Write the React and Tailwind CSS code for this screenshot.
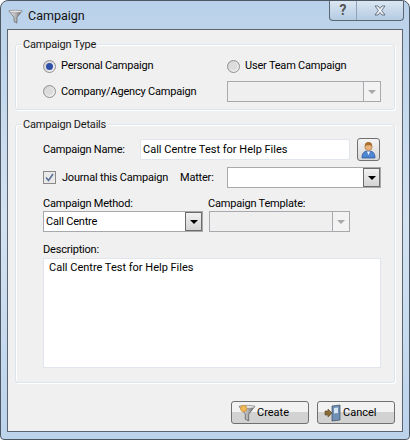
const FONT = "font-['Roboto','Liberation_Sans',sans-serif]";

function Funnel({ size = 16, dot = false }) {
  return (
    <svg width={size} height={size} viewBox="0 0 16 16" className="shrink-0">
      <defs>
        <linearGradient id={dot ? "fa" : "fb"} x1="0" x2="1" y1="0" y2="0">
          <stop offset="0" stopColor="#f8f8f8" />
          <stop offset="0.55" stopColor="#b0b0b0" />
          <stop offset="1" stopColor="#5f5f5f" />
        </linearGradient>
      </defs>
      <path
        d="M1 2 L15 2 L9.5 9 L9.5 15 L6.5 13.5 L6.5 9 Z"
        fill={`url(#${dot ? "fa" : "fb"})`}
        stroke="#6a6a6a"
        strokeWidth="0.8"
      />
      <ellipse cx="8" cy="2.6" rx="7" ry="1.4" fill="#e4e4e4" stroke="#808080" strokeWidth="0.5" />
      {dot && <circle cx="5" cy="4" r="2.8" fill="#f0b85a" stroke="#c98a2a" strokeWidth="0.6" />}
    </svg>
  );
}

function Radio({ checked }) {
  return (
    <span className="w-[13px] h-[13px] rounded-full border border-[#8f8f8f] bg-gradient-to-br from-[#cfcfcf] to-[#f5f5f5] flex items-center justify-center shrink-0">
      <span
        className={`w-[7px] h-[7px] rounded-full ${
          checked ? "bg-[#2f50a8]" : "bg-[#dcdcdc]"
        }`}
      />
    </span>
  );
}

function Combo({ width, text, disabled, arrowBox }) {
  return (
    <div
      className={`h-[21px] border border-[#a9a9ad] flex shrink-0 ${
        disabled ? "bg-[#efefef]" : "bg-white"
      } ${width}`}
    >
      <div className="flex-1 pl-[2px] leading-[19px] text-black">{text}</div>
      <div
        className={`w-[17px] flex items-center justify-center ${
          arrowBox
            ? "border border-[#6c6c6c] bg-gradient-to-b from-[#f2f2f2] to-[#d4d4d4]"
            : "border-l border-[#a9a9ad] bg-[#f3f3f3]"
        }`}
      >
        <span
          className={`w-0 h-0 border-x-[4px] border-x-transparent border-t-[4px] ${
            disabled ? "border-t-[#a8a8a8]" : "border-t-black"
          }`}
        />
      </div>
    </div>
  );
}

function Group({ title, className, children }) {
  return (
    <div className={`relative border border-[#dce4ec] rounded-[3px] shadow-[inset_1px_1px_0_#fff,1px_1px_0_#fff] ${className}`}>
      <span className="absolute left-[6px] -top-[8px] bg-[#f0f0f0] px-[1px] leading-[15px] text-[#1a1a1a] whitespace-nowrap">
        {title}
      </span>
      {children}
    </div>
  );
}

function Button({ icon, label }) {
  return (
    <div className="w-[78px] h-[23px] rounded-[3px] border border-[#707070] bg-gradient-to-b from-[#f2f2f2] from-50% to-[#d2d2d2] to-50% flex items-center pl-[6px] gap-[1px] text-black tracking-normal">
      {icon}
      <span className="pt-[2px]">{label}</span>
    </div>
  );
}

export default function App() {
  return (
    <div className={`${FONT} text-[11px] tracking-[-0.2px] whitespace-nowrap w-[410px] h-[440px] bg-white`}>
      <div className="w-full h-full rounded-t-[8px] rounded-b-[4px] border border-[#4d5863] bg-gradient-to-b from-[#b9d1ea] via-[#d3e2f1] to-[#bcd3ec] flex flex-col px-[6px] pb-[7px]">
        {/* title bar */}
        <div className="h-[28px] flex items-start shrink-0">
          <div className="flex items-center gap-[5px] pt-[6px] pl-[1px]">
            <Funnel size={15} />
            <span className="text-[12.5px] tracking-normal text-[#111]">Campaign</span>
          </div>
          <div className="ml-auto -mr-[1px] h-[20px] flex rounded-b-[4px] border border-t-0 border-[#5c6773] bg-gradient-to-b from-[#dbe6f2] to-[#b5cbe3] text-[#555] font-bold">
            <div className="w-[27px] flex items-center justify-center border-r border-[#8fa3b8] text-[14px]">?</div>
            <div className="w-[46px] flex items-center justify-center">
              <svg width="12" height="11" viewBox="0 0 12 11">
                <path
                  d="M1 1 H4 L6 3.5 L8 1 H11 L7.6 5.5 L11 10 H8 L6 7.5 L4 10 H1 L4.4 5.5 Z"
                  fill="#f4f7fb"
                  stroke="#5a6572"
                  strokeWidth="0.9"
                />
              </svg>
            </div>
          </div>
        </div>

        {/* dialog body */}
        <div className="flex-1 border border-[#5b6571] bg-[#f0f0f0] px-[7px] pt-[14px] flex flex-col">
          <Group title="Campaign Type" className="h-[66px] shrink-0 pl-[27px] pt-[13px]">
            <div className="flex items-center h-[16px]">
              <Radio checked />
              <span className="ml-[5px] w-[166px] pt-[1px]">Personal Campaign</span>
              <Radio />
              <span className="ml-[5px] pt-[1px]">User Team Campaign</span>
            </div>
            <div className="flex items-center mt-[7px]">
              <Radio />
              <span className="ml-[5px] w-[166px] pt-[2px]">Company/Agency Campaign</span>
              <Combo width="w-[154px]" disabled />
            </div>
          </Group>

          <Group title="Campaign Details" className="mt-[14px] h-[259px] shrink-0 pl-[27px] pt-[13px]">
            <div className="flex items-center h-[23px]">
              <span className="w-[97px] pt-[2px]">Campaign Name:</span>
              <div className="w-[210px] h-[21px] bg-white border border-[#e1e6ec] rounded-[2px] pl-[2px] leading-[20px] tracking-normal">
                Call Centre Test for Help Files
              </div>
              <div className="ml-[7px] w-[23px] h-[23px] rounded-[3px] border border-[#707070] bg-gradient-to-b from-[#f4f4f4] to-[#d8d8d8] flex items-center justify-center">
                <svg width="15" height="18" viewBox="0 0 15 18">
                  <path d="M1 17 C1 11 4 10 7.5 10 C11 10 14 11 14 17 Z" fill="#4f86d0" stroke="#1f4f99" strokeWidth="0.7" />
                  <path d="M6 10.5 L7.5 14 L9 10.5 Z" fill="#fff" />
                  <circle cx="7.5" cy="6" r="3.6" fill="#eab27c" stroke="#9a6a3a" strokeWidth="0.6" />
                  <path d="M3.8 5.6 C3.6 2 5.5 1 7.5 1 C9.5 1 11.4 2 11.2 5.6 C10 3.8 5 3.8 3.8 5.6 Z" fill="#a8702f" />
                </svg>
              </div>
            </div>

            <div className="flex items-center mt-[6px]">
              <span className="w-[13px] h-[13px] border border-[#8a8a8a] bg-[#e9e9e9] flex items-center justify-center shrink-0">
                <svg width="9" height="9" viewBox="0 0 9 9">
                  <path d="M1 4.5 L3.5 7.5 L8 1" fill="none" stroke="#5a6f96" strokeWidth="1.6" />
                </svg>
              </span>
              <span className="ml-[6px] w-[118px] pt-[2px]">Journal this Campaign</span>
              <span className="w-[47px] pt-[2px]">Matter:</span>
              <Combo width="w-[154px]" arrowBox />
            </div>

            <div className="flex mt-[8px] leading-[15px]">
              <span className="w-[165px]">Campaign Method:</span>
              <span>Campaign Template:</span>
            </div>
            <div className="flex">
              <Combo width="w-[160px]" text="Call Centre" arrowBox />
              <div className="w-[6px]" />
              <Combo width="w-[141px]" disabled />
            </div>

            <div className="mt-[10px] leading-[16px]">Description:</div>
            <div className="w-[338px] h-[110px] bg-white border border-[#e1e6ec] px-[5px] pt-[1px] tracking-normal">
              Call Centre Test for Help Files
            </div>
          </Group>

          <div className="mt-auto mb-[7px] flex justify-end gap-[8px]">
            <Button icon={<Funnel size={18} dot />} label="Create" />
            <Button
              icon={
                <svg width="18" height="18" viewBox="0 0 18 18" className="shrink-0">
                  <path d="M8 2 L16 1 L16 16 L8 17 Z" fill="#6f8fb5" stroke="#3c4a5c" strokeWidth="0.7" />
                  <path d="M10 4 L14 3.5 L14 9 L10 9.5 Z" fill="#d6e4f3" />
                  <path d="M1 7 L4 7 L4 5 L8 9 L4 13 L4 11 L1 11 Z" fill="#8b6b3a" stroke="#5a4420" strokeWidth="0.6" />
                </svg>
              }
              label="Cancel"
            />
          </div>
        </div>
      </div>
    </div>
  );
}
